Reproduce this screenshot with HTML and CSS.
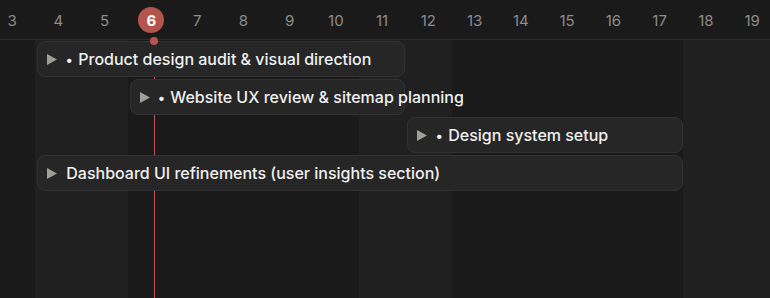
FILE: index.html
```html
<!DOCTYPE html>
<html lang="en">
<head>
  <meta charset="UTF-8">
  <meta name="viewport" content="width=device-width, initial-scale=1.0">
  <title>Timeline</title>
  <link rel="stylesheet" href="styles.css">
</head>
<body>
  <div class="timeline">
    <div class="days">
      <div class="day">3</div>
      <div class="day">4</div>
      <div class="day">5</div>
      <div class="day"><span class="today-badge">6</span></div>
      <div class="day">7</div>
      <div class="day">8</div>
      <div class="day">9</div>
      <div class="day">10</div>
      <div class="day">11</div>
      <div class="day">12</div>
      <div class="day">13</div>
      <div class="day">14</div>
      <div class="day">15</div>
      <div class="day">16</div>
      <div class="day">17</div>
      <div class="day">18</div>
      <div class="day">19</div>
    </div>

    <div class="chart">
      <div class="col weekend c4"></div>
      <div class="col weekend c11"></div>
      <div class="col weekend c18"></div>

      <div class="now-line"></div>
      <div class="now-dot"></div>

      <div class="task r1 span-4-12">
        <svg class="caret" viewBox="0 0 10 11"><path d="M0 0L10 5.5L0 11Z"/></svg>
        <span class="dot">•</span>
        <span class="label">Product design audit &amp; visual direction</span>
      </div>
      <div class="task r2 span-6-12">
        <svg class="caret" viewBox="0 0 10 11"><path d="M0 0L10 5.5L0 11Z"/></svg>
        <span class="dot">•</span>
        <span class="label">Website UX review &amp; sitemap planning</span>
      </div>
      <div class="task r3 span-12-18">
        <svg class="caret" viewBox="0 0 10 11"><path d="M0 0L10 5.5L0 11Z"/></svg>
        <span class="dot">•</span>
        <span class="label">Design system setup</span>
      </div>
      <div class="task r4 span-4-18">
        <svg class="caret" viewBox="0 0 10 11"><path d="M0 0L10 5.5L0 11Z"/></svg>
        <span class="label">Dashboard UI refinements (user insights section)</span>
      </div>
    </div>
  </div>
</body>
</html>
```

FILE: styles.css
```css
/* Base */
html, body {
  margin: 0;
  height: 100%;
  background: #1a1a1a;
  overflow: hidden;
  font-family: Inter, "Noto Sans", sans-serif;
}

/* Day columns are 46.25px wide; day 3 is cut off on the left */
.timeline {
  --col: 46.25px;
  margin-left: -11px;
  width: calc(var(--col) * 17);
  height: 100%;
  display: flex;
  flex-direction: column;
}

/* Header */
.days {
  display: grid;
  grid-template-columns: repeat(17, var(--col));
  height: 39px;
  border-bottom: 1px solid #2b2b2b;
  flex-shrink: 0;
}

.day {
  display: flex;
  align-items: center;
  justify-content: center;
  padding-top: 1px;
  font-size: 15px;
  color: #8c8c8c;
}

.today-badge {
  display: flex;
  align-items: center;
  justify-content: center;
  width: 26px;
  height: 26px;
  margin-left: 1px;
  border-radius: 50%;
  background: #b4554d;
  color: #fff;
  font-weight: 700;
  font-size: 15px;
}

/* Chart body */
.chart {
  position: relative;
  flex: 1;
  display: grid;
  grid-template-columns: repeat(17, var(--col));
  grid-template-rows: repeat(4, 36px) 1fr;
  row-gap: 2px;
  padding-top: 1px;
}

.col {
  grid-row: 1 / -1;
  margin-top: -1px;
}

.weekend { background: #202020; }
.c4 { grid-column: 2 / 4; }
.c11 { grid-column: 9 / 11; }
.c18 { grid-column: 16 / 18; }

.now-line {
  position: absolute;
  left: 165px;
  top: 0;
  bottom: 0;
  width: 1px;
  background: #c4564d;
}

.now-dot {
  position: absolute;
  left: 161px;
  top: -3px;
  width: 8px;
  height: 8px;
  border-radius: 50%;
  background: #b4554d;
  z-index: 2;
}

/* Tasks */
.task {
  position: relative;
  z-index: 1;
  display: flex;
  align-items: center;
  margin-left: 2px;
  padding-left: 9px;
  background: #262626;
  border: 1px solid #323232;
  border-radius: 8px;
  color: #f1f1f1;
  font-size: 16px;
  font-weight: 500;
  white-space: nowrap;
}

.r1 { grid-row: 1; }
.r2 { grid-row: 2; }
.r3 { grid-row: 3; }
.r4 { grid-row: 4; }

.span-4-12 { grid-column: 2 / 10; }
.span-6-12 { grid-column: 4 / 10; }
.span-12-18 { grid-column: 10 / 16; }
.span-4-18 { grid-column: 2 / 16; }

.caret {
  width: 10px;
  height: 11px;
  fill: #a19e99;
  flex-shrink: 0;
}

.dot {
  width: 8px;
  margin-left: 8px;
  text-align: center;
  font-size: 14px;
}

.label {
  margin-left: 9px;
}

.dot + .label {
  margin-left: 5px;
}
```
